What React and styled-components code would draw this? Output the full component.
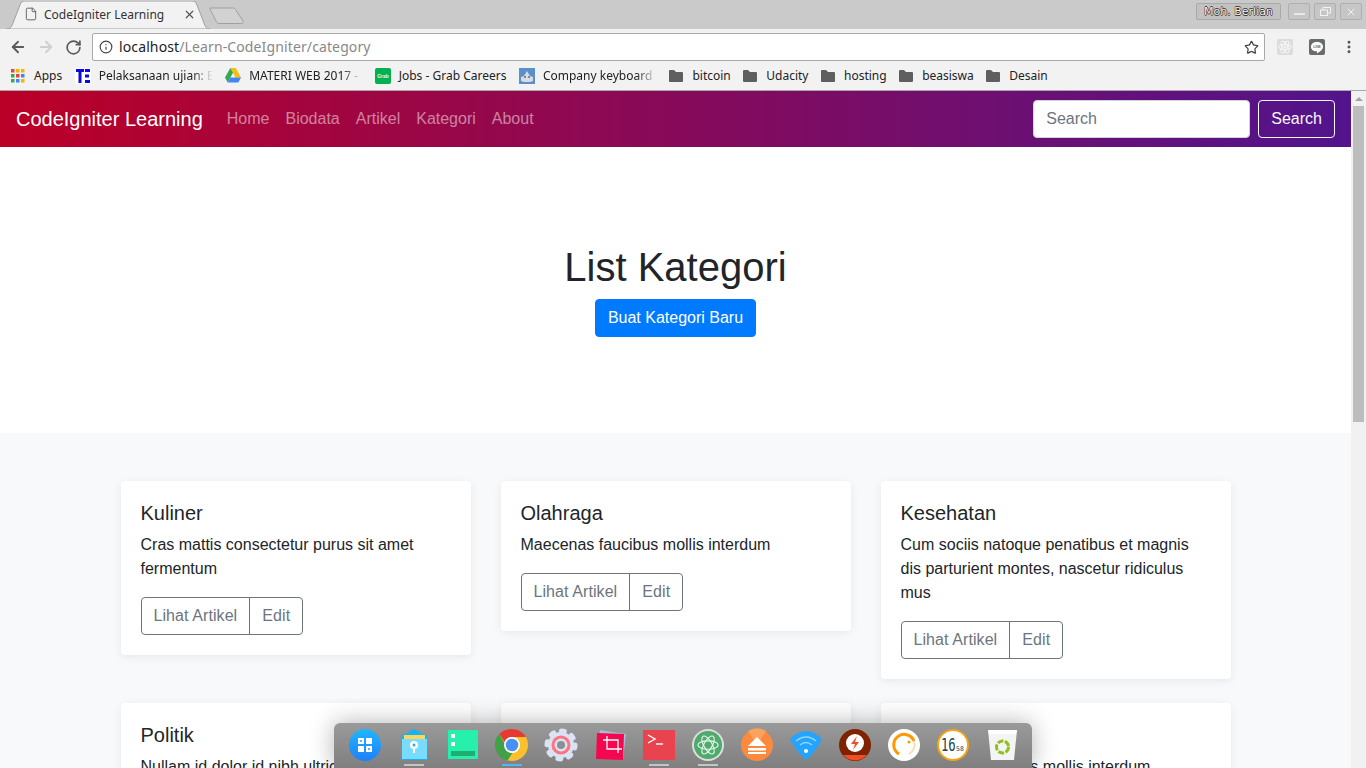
import React from 'react';
import styled, { createGlobalStyle } from 'styled-components';
import { ArrowLeft, ArrowRight, RotateCw, Info, Star, File, X, EllipsisVertical } from 'lucide-react';

const GlobalStyle = createGlobalStyle`
  html, body {
    margin: 0;
    height: 100%;
    overflow: hidden;
  }
  * {
    box-sizing: border-box;
  }
`;

const categories = [
  { id: 1, name: 'Kuliner', desc: 'Cras mattis consectetur purus sit amet fermentum' },
  { id: 2, name: 'Olahraga', desc: 'Maecenas faucibus mollis interdum' },
  { id: 3, name: 'Kesehatan', desc: 'Cum sociis natoque penatibus et magnis dis parturient montes, nascetur ridiculus mus' },
  { id: 4, name: 'Politik', desc: 'Nullam id dolor id nibh ultricies vehicula ut id elit' },
  { id: 5, name: 'Teknologi', desc: 'Donec ullamcorper nulla non metus auctor fringilla' },
  { id: 6, name: 'Wisata', desc: 'Maecenas faucibus mollis interdum' },
];

const Screen = styled.div`
  position: relative;
  display: flex;
  flex-direction: column;
  width: 1366px;
  height: 768px;
  overflow: hidden;
  font-family: "Liberation Sans", Arial, sans-serif;
`;

/* browser chrome */
const TabStrip = styled.div`
  display: flex;
  align-items: flex-end;
  height: 29px;
  flex: none;
  padding-left: 6px;
  background: #cacaca;
`;

const Tab = styled.div`
  position: relative;
  display: flex;
  align-items: center;
  width: 204px;
  height: 28px;
  padding: 0 14px 2px 18px;
  font: 12px "Noto Sans", sans-serif;
  color: #333;
`;

const TabShape = styled.svg`
  position: absolute;
  left: 0;
  top: 0;
  z-index: 0;
`;

const TabTitle = styled.span`
  position: relative;
  flex: 1;
  margin-left: 6px;
  white-space: nowrap;
`;

const TabIcon = styled.span`
  position: relative;
  display: flex;
  color: #555;
`;

const NewTab = styled.svg`
  margin: 0 0 4px -1px;
`;

const WindowControls = styled.div`
  display: flex;
  align-self: flex-start;
  align-items: center;
  gap: 4px;
  margin: 3px 4px 0 auto;
`;

const UserBadge = styled.div`
  display: flex;
  align-items: center;
  justify-content: center;
  width: 85px;
  height: 17px;
  margin-right: 3px;
  background: #c2c2c2;
  border: 1px solid #a9a9a9;
  border-radius: 2px;
  font: 11px "DejaVu Sans", sans-serif;
  color: #f4f4f4;
  text-shadow: 0.6px 0 0 #333, -0.6px 0 0 #333, 0 0.6px 0 #333, 0 -0.6px 0 #333;
`;

const WindowButton = styled.div`
  display: flex;
  align-items: center;
  justify-content: center;
  width: 22px;
  height: 17px;
  background: #c6c6c6;
  border: 1px solid #aeaeae;
  border-radius: 2px;
  color: #f2f2f2;
`;

const Toolbar = styled.div`
  display: flex;
  align-items: center;
  height: 33px;
  flex: none;
  padding: 3px 9px 0 9px;
  background: #f2f2f2;
  color: #5a5a5a;
`;

const NavIcon = styled.span`
  display: flex;
  width: 18px;
  margin-right: 10px;
  color: ${(p) => (p.$muted ? '#cfcfcf' : '#5a5a5a')};
  &:nth-child(3) {
    margin-right: 9px;
  }
`;

const Omnibox = styled.div`
  display: flex;
  align-items: center;
  flex: 1;
  height: 28px;
  padding: 0 5px 0 6px;
  background: #fff;
  border: 1px solid #a9a9a9;
  border-radius: 2px;
`;

const Url = styled.div`
  flex: 1;
  margin: 0 0 2px 6px;
  font: 14px "Noto Sans", sans-serif;
  letter-spacing: 0.12px;
  color: #888;
  b {
    font-weight: 400;
    color: #222;
  }
`;

const Extensions = styled.div`
  display: flex;
  gap: 16px;
  margin-left: 12px;
`;

const Extension = styled.span`
  display: flex;
  align-items: center;
  justify-content: center;
  width: 16px;
  height: 16px;
  border-radius: 2px;
  background: ${(p) => p.$bg};
`;

const Bookmarks = styled.div`
  display: flex;
  align-items: center;
  gap: 12.5px;
  height: 29px;
  flex: none;
  padding: 0 0 1px 11px;
  background: #f2f2f2;
  border-bottom: 1px solid #a8a8a8;
`;

const Bookmark = styled.div`
  display: flex;
  align-items: center;
  gap: 8px;
  flex: none;
  font: 12px "Noto Sans", sans-serif;
  color: #222;
  white-space: nowrap;
  svg {
    flex: none;
  }
`;

const BookmarkLabel = styled.span`
  ${(p) => p.$width && `
    width: ${p.$width}px;
    mask-image: linear-gradient(to right, #000 82%, transparent);
  `}
`;

/* page inside the browser */
const Viewport = styled.div`
  display: flex;
  flex: 1;
  min-height: 0;
`;

const Page = styled.div`
  flex: 1;
  min-width: 0;
  overflow: hidden;
  color: #212529;
  font-size: 16px;
  line-height: 1.5;
`;

const Scrollbar = styled.div`
  width: 15px;
  flex: none;
  padding: 0 2px;
  background: #f1f1f1;
`;

const ScrollArrow = styled.div`
  width: 0;
  margin: 6px auto 5px;
  border-left: 4px solid transparent;
  border-right: 4px solid transparent;
  border-bottom: 4px solid #a3a3a3;
`;

const ScrollThumb = styled.div`
  height: 316px;
  background: #bdbdbd;
`;

const Navbar = styled.nav`
  display: flex;
  align-items: center;
  height: 56px;
  padding: 0 16px;
  background: linear-gradient(to right, #bb0027, #52148c);
`;

const Brand = styled.a`
  margin-right: 16px;
  font-size: 20px;
  color: #fff;
`;

const NavLink = styled.a`
  padding: 8px;
  color: rgba(255, 255, 255, 0.5);
`;

const SearchForm = styled.form`
  display: flex;
  gap: 8px;
  margin-left: auto;
`;

const SearchInput = styled.input`
  width: 217px;
  height: 38px;
  padding: 6px 12px;
  border: 1px solid #ced4da;
  border-radius: 4px;
  font: 16px "Liberation Sans", Arial, sans-serif;
  color: #495057;
  &::placeholder {
    color: #6c757d;
  }
`;

const SearchButton = styled.button`
  height: 38px;
  padding: 0 12px;
  background: transparent;
  border: 1px solid #f8f9fa;
  border-radius: 4px;
  font: 16px "Liberation Sans", Arial, sans-serif;
  color: #f8f9fa;
`;

const Hero = styled.section`
  padding: 96px 0;
  text-align: center;
  background: #fff;
`;

const HeroTitle = styled.h1`
  margin: 0 0 8px;
  font-size: 40px;
  font-weight: 500;
  line-height: 1.2;
`;

const PrimaryButton = styled.a`
  display: inline-block;
  padding: 6px 12px;
  border: 1px solid #007bff;
  border-radius: 4px;
  background: #007bff;
  color: #fff;
`;

const Album = styled.section`
  padding: 48px 0;
  background: #f8f9fa;
`;

const CardGrid = styled.div`
  display: grid;
  grid-template-columns: repeat(3, 350px);
  gap: 0 30px;
  align-items: start;
  width: 1110px;
  margin: 0 auto;
`;

const Card = styled.div`
  margin-bottom: 24px;
  padding: 20px;
  background: #fff;
  border-radius: 4px;
  box-shadow: 0 2px 10px rgba(0, 0, 0, 0.07);
`;

const CardTitle = styled.h5`
  margin: 0 0 8px;
  font-size: 20px;
  font-weight: 500;
  line-height: 1.2;
`;

const CardText = styled.p`
  margin: 0 0 16px;
`;

const ButtonGroup = styled.div`
  display: inline-flex;
`;

const GroupButton = styled.a`
  padding: 6px 12px;
  border: 1px solid #6c757d;
  letter-spacing: 0.08px;
  color: #6c757d;
  &:first-child {
    border-radius: 4px 0 0 4px;
  }
  &:last-child {
    margin-left: -1px;
    border-radius: 0 4px 4px 0;
  }
`;

/* desktop dock, it lies over the browser window */
const Dock = styled.div`
  position: absolute;
  left: 334px;
  bottom: 0;
  display: flex;
  align-items: flex-start;
  justify-content: space-between;
  width: 698px;
  height: 45px;
  padding: 5px 6px 0 7px;
  background: linear-gradient(#9a9a9a, #7f7f7f);
  border-radius: 6px 6px 0 0;
  box-shadow: 0 0 24px rgba(0, 0, 0, 0.3);
`;

const DockItem = styled.div`
  position: relative;
  display: flex;
  justify-content: center;
  width: 48px;
  &::after {
    content: '';
    display: ${(p) => (p.$running ? 'block' : 'none')};
    position: absolute;
    left: 14px;
    top: 36px;
    width: 20px;
    height: 2px;
    background: ${(p) => (p.$running === 'active' ? '#59b4ee' : '#c4c4c4')};
  }
`;

const GridIcon = () => (
  <svg width="14" height="14" viewBox="0 0 14 14" style={{ marginRight: 1 }}>
    {['#e8453c', '#f4b400', '#f4b400', '#34a853', '#e8453c', '#4285f4', '#34a853', '#4285f4', '#f4b400'].map((c, i) => (
      <rect key={i} x={(i % 3) * 5} y={Math.floor(i / 3) * 5} width="3.5" height="3.5" fill={c} />
    ))}
  </svg>
);

const TeIcon = () => (
  <svg width="16" height="16" viewBox="0 0 16 16">
    <rect width="16" height="16" fill="#fff" />
    <path d="M1 1h8v3H6.500v11h-3V4H1zM10 1h5v3h-5zM10 6.500h4v3h-4zM10 12h5v3h-5z" fill="#0a0ae0" />
  </svg>
);

const DriveIcon = () => (
  <svg width="16" height="15" viewBox="0 0 16 15">
    <path d="M5.300 0h5.400l5.300 9.600h-5.400z" fill="#fbbc05" />
    <path d="M5.300 0 8 4.800 2.700 14.600 0 9.600z" fill="#34a853" />
    <path d="M5.400 9.600H16l-2.700 5H2.700z" fill="#4285f4" />
  </svg>
);

const GrabIcon = () => (
  <svg width="16" height="16" viewBox="0 0 16 16">
    <rect width="16" height="16" rx="2" fill="#00b14f" />
    <text x="8" y="10" textAnchor="middle" fontSize="5" fontFamily="Liberation Sans" fontWeight="700" fill="#e6f8ee">Grab</text>
  </svg>
);

const CompanyIcon = () => (
  <svg width="16" height="16" viewBox="0 0 16 16">
    <rect width="16" height="16" fill="#5b8fc9" />
    <path d="M2 13V9l3-1 3-5 3 5 3 1v4l-3 1H5z" fill="#d7dbe2" />
    <circle cx="6" cy="9" r="1" fill="#5b6b85" />
    <circle cx="10" cy="9" r="1" fill="#5b6b85" />
  </svg>
);

const FolderIcon = () => (
  <svg width="14" height="12" viewBox="0 0 14 12" style={{ marginRight: 1 }}>
    <path d="M1 0h4l2 2h6a1 1 0 0 1 1 1v8a1 1 0 0 1-1 1H1a1 1 0 0 1-1-1V1a1 1 0 0 1 1-1z" fill="#5f5f5f" />
  </svg>
);

const AtomIcon = ({ stroke, size = 14 }) => (
  <svg width={size} height={size} viewBox="0 0 24 24" fill="none" stroke={stroke} strokeWidth="1.6">
    <ellipse cx="12" cy="12" rx="11" ry="4.500" />
    <ellipse cx="12" cy="12" rx="11" ry="4.500" transform="rotate(60 12 12)" />
    <ellipse cx="12" cy="12" rx="11" ry="4.500" transform="rotate(120 12 12)" />
    <circle cx="12" cy="12" r="1.500" fill={stroke} />
  </svg>
);

const dockIcons = [
  {
    id: 'launcher',
    svg: (
      <>
        <defs>
          <linearGradient id="launcherFill" x1="0" y1="0" x2="0" y2="1">
            <stop offset="0" stopColor="#20b6fb" />
            <stop offset="1" stopColor="#1f7ffb" />
          </linearGradient>
        </defs>
        <circle cx="17" cy="17" r="16" fill="url(#launcherFill)" />
        <path d="M10 10h6v6h-6zM18 10h6v6h-6zM10 18h6v6h-6zM18 18h6v6h-6z" fill="#fff" />
        <path d="M12 12h2v2h-2zM20 20h2v2h-2z" fill="#59b2fb" />
      </>
    ),
  },
  {
    id: 'files',
    running: true,
    svg: (
      <>
        <path d="M4 8 17 1l13 7v24H4z" fill="#14b4f4" />
        <path d="M7 7h21v4H7z" fill="#ffd65c" />
        <path d="M5 11h25v20H5z" fill="#78dcff" />
        <circle cx="17" cy="17" r="4" fill="#fff" />
        <path d="M16 17h2v8h-2z" fill="#fff" />
        <circle cx="17" cy="17" r="1.500" fill="#3aa8d8" />
      </>
    ),
  },
  {
    id: 'monitor',
    svg: (
      <>
        <rect x="2" y="2" width="30" height="29" fill="#27f0ac" />
        <path d="M5 6h4v4H5zM5 14h4v4H5z" fill="#fff" />
        <rect x="5" y="23" width="24" height="5" fill="#1fae72" />
      </>
    ),
  },
  {
    id: 'chrome',
    running: 'active',
    svg: (
      <>
        <circle cx="17" cy="17" r="16" fill="#fbc02d" />
        <path d="M17 1a16 16 0 0 1 13.900 8H17a8 8 0 0 0-7.400 5L4.300 6A16 16 0 0 1 17 1z" fill="#e53935" />
        <path d="M4.300 6l6.900 12a7 7 0 0 0 6.300 7l-5 7.600A16 16 0 0 1 4.300 6z" fill="#43a047" />
        <circle cx="17" cy="17" r="8" fill="#fff" />
        <circle cx="17" cy="17" r="6.300" fill="#4a90f0" />
      </>
    ),
  },
  {
    id: 'settings',
    svg: (
      <>
        <circle cx="17" cy="17" r="13" fill="#d9e3f4" />
        <circle cx="17" cy="17" r="14" fill="none" stroke="#d9e3f4" strokeWidth="5" strokeLinecap="round" strokeDasharray="3 8" />
        <circle cx="17" cy="17" r="9.500" fill="#ff7480" />
        <circle cx="17" cy="17" r="6.500" fill="#d9e3f4" />
        <circle cx="17" cy="17" r="4" fill="#8a8f98" />
      </>
    ),
  },
  {
    id: 'crop',
    svg: (
      <>
        <path d="M7 2l26 4-3 26L4 28z" fill="#a9c6e8" opacity="0.8" />
        <path d="M4 5l27 1-1 26-27-1z" fill="#f5074f" />
        <path d="M10 12h15v13M14 8v13h15" fill="none" stroke="#fff" strokeWidth="1.300" />
      </>
    ),
  },
  {
    id: 'terminal',
    running: true,
    svg: (
      <>
        <rect x="1" y="2" width="32" height="30" fill="#e9434f" />
        <path d="M6 7l7 4-7 4" fill="none" stroke="#fff" strokeWidth="1.400" />
        <path d="M14 16h7" stroke="#fff" strokeWidth="1.400" />
      </>
    ),
  },
  {
    id: 'atom',
    running: true,
    svg: (
      <>
        <circle cx="17" cy="17" r="16" fill="#ddd" />
        <circle cx="17" cy="17" r="14" fill="#4eaa6d" />
        <g transform="translate(6 6) scale(0.92)">
          <ellipse cx="12" cy="12" rx="11" ry="4.500" fill="none" stroke="#e8f5ec" strokeWidth="1.200" />
          <ellipse cx="12" cy="12" rx="11" ry="4.500" fill="none" stroke="#e8f5ec" strokeWidth="1.200" transform="rotate(60 12 12)" />
          <ellipse cx="12" cy="12" rx="11" ry="4.500" fill="none" stroke="#e8f5ec" strokeWidth="1.200" transform="rotate(120 12 12)" />
        </g>
      </>
    ),
  },
  {
    id: 'eject',
    svg: (
      <>
        <circle cx="17" cy="17" r="16" fill="#fb8a3c" />
        <path d="M17 17 8 3a16 16 0 0 1 18 0z" fill="#fba35c" />
        <path d="M17 9l9 9H8z" fill="#fff" />
        <path d="M8 20h18v2.500H8zM8 24h18v2H8z" fill="#fff" />
      </>
    ),
  },
  {
    id: 'wifi',
    svg: (
      <>
        <path d="M1 11Q17-5 33 11Q27 24 17 32Q7 24 1 11z" fill="#24a4ff" />
        <path d="M7 13q10-8 20 0M11 17q6-5 12 0" fill="none" stroke="#8fd5ff" strokeWidth="1.500" />
        <circle cx="17" cy="23" r="2" fill="#fff" />
      </>
    ),
  },
  {
    id: 'flash',
    svg: (
      <>
        <circle cx="17" cy="17" r="16" fill="#7f2200" />
        <path d="M5 27h24a16 16 0 0 1-24 0z" fill="#f04e23" />
        <circle cx="17" cy="15" r="9" fill="#fff" />
        <path d="M19 8l-6 8h4l-2 6 6-8h-4z" fill="#f04e23" />
      </>
    ),
  },
  {
    id: 'dial',
    svg: (
      <>
        <circle cx="17" cy="17" r="16" fill="#fff" />
        <path d="M12 26A10.500 10.500 0 1 1 27 13" fill="none" stroke="#f90" strokeWidth="3" />
        <path d="M27 13a10.500 10.500 0 0 1-5 13" fill="none" stroke="#f4e2bb" strokeWidth="2" />
        <circle cx="22" cy="14" r="1.500" fill="#f90" />
      </>
    ),
  },
  {
    id: 'clock',
    svg: (
      <>
        <circle cx="17" cy="17" r="15" fill="#fff" stroke="#f5a511" strokeWidth="2" />
        <text transform="translate(5 23) scale(0.72 1)" fontSize="17" fontFamily="DejaVu Sans Mono" fill="#24424a">16</text>
        <text x="20" y="23" fontSize="6.500" fontFamily="DejaVu Sans Mono" fill="#24424a">58</text>
      </>
    ),
  },
  {
    id: 'trash',
    svg: (
      <>
        <path d="M3 2h29l-3 30H6z" fill="#f4f4f4" />
        <path d="M3 2h29l-1 4H4z" fill="#fff" />
        <circle cx="17.500" cy="19" r="6" fill="none" stroke="#90c020" strokeWidth="3" strokeDasharray="6 1.500" />
      </>
    ),
  },
];

const bookmarks = [
  { id: 'apps', icon: <GridIcon />, label: 'Apps' },
  { id: 'te', icon: <TeIcon />, label: 'Pelaksanaan ujian: E', width: 114 },
  { id: 'drive', icon: <DriveIcon />, label: 'MATERI WEB 2017 -', width: 113 },
  { id: 'grab', icon: <GrabIcon />, label: 'Jobs - Grab Careers' },
  { id: 'company', icon: <CompanyIcon />, label: 'Company keyboard t', width: 114 },
  { id: 'bitcoin', icon: <FolderIcon />, label: 'bitcoin' },
  { id: 'udacity', icon: <FolderIcon />, label: 'Udacity' },
  { id: 'hosting', icon: <FolderIcon />, label: 'hosting' },
  { id: 'beasiswa', icon: <FolderIcon />, label: 'beasiswa' },
  { id: 'desain', icon: <FolderIcon />, label: 'Desain' },
];

export default function App() {
  return (
    <Screen>
      <GlobalStyle />
      <TabStrip>
        <Tab>
          <TabShape width="204" height="28" viewBox="0 0 204 28">
            <path d="M0 28C5 28 6 25 7 22L14 4C15 1 16 0 19 0H186C189 0 190 1 191 4L198 22C199 25 200 28 204 28Z" fill="#f2f2f2" stroke="#a0a0a0" />
          </TabShape>
          <TabIcon><File size={14} strokeWidth={1.5} /></TabIcon>
          <TabTitle>CodeIgniter Learning</TabTitle>
          <TabIcon><X size={13} strokeWidth={2.2} /></TabIcon>
        </Tab>
        <NewTab width="36" height="19" viewBox="0 0 36 19">
          <path d="M1 2h23c1 0 2 .5 2.500 1.500L34 15c.5 1.500 0 2.500-1.500 2.500H10c-1 0-2-.5-2.500-1.500L1 3z" fill="#d2d2d2" stroke="#a0a0a0" />
        </NewTab>
        <WindowControls>
          <UserBadge>Moh. Berlian</UserBadge>
          <WindowButton>
            <svg width="11" height="9" viewBox="0 0 11 9"><path d="M0 7h11" stroke="#f2f2f2" strokeWidth="1.600" /></svg>
          </WindowButton>
          <WindowButton>
            <svg width="11" height="9" viewBox="0 0 11 9" fill="none" stroke="#f2f2f2"><rect x="0.500" y="3" width="7" height="5.500" /><path d="M3 3V.5h7.500V6H8" /></svg>
          </WindowButton>
          <WindowButton>
            <X size={12} strokeWidth={2} />
          </WindowButton>
        </WindowControls>
      </TabStrip>
      <Toolbar>
        <NavIcon><ArrowLeft size={18} strokeWidth={2.4} /></NavIcon>
        <NavIcon $muted><ArrowRight size={18} strokeWidth={2.4} /></NavIcon>
        <NavIcon><RotateCw size={17} strokeWidth={2.4} /></NavIcon>
        <Omnibox>
          <Info size={14} strokeWidth={2} color="#444" />
          <Url><b>localhost</b>/Learn-CodeIgniter/category</Url>
          <Star size={15} strokeWidth={2} color="#444" />
        </Omnibox>
        <Extensions>
          <Extension $bg="#dcdcdc"><AtomIcon stroke="#f7f7f7" /></Extension>
          <Extension $bg="#6b6b6b">
            <svg width="14" height="13" viewBox="0 0 14 13">
              <path d="M7 1c3.500 0 6 2 6 4.700S10 10.500 7 12.500C7.300 10.500 7 10.300 6.300 10.300 3 10.300 1 8.300 1 5.700S3.500 1 7 1z" fill="#fff" />
              <text x="7" y="7.200" textAnchor="middle" fontSize="3.400" fontFamily="Liberation Sans" fontWeight="700" fill="#6b6b6b">LINE</text>
            </svg>
          </Extension>
          <Extension $bg="transparent"><EllipsisVertical size={16} strokeWidth={2.4} color="#555" /></Extension>
        </Extensions>
      </Toolbar>
      <Bookmarks>
        {bookmarks.map((b) => (
          <Bookmark key={b.id}>
            {b.icon}
            <BookmarkLabel $width={b.width}>{b.label}</BookmarkLabel>
          </Bookmark>
        ))}
      </Bookmarks>
      <Viewport>
        <Page>
          <Navbar>
            <Brand>CodeIgniter Learning</Brand>
            <NavLink>Home</NavLink>
            <NavLink>Biodata</NavLink>
            <NavLink>Artikel</NavLink>
            <NavLink>Kategori</NavLink>
            <NavLink>About</NavLink>
            <SearchForm>
              <SearchInput placeholder="Search" />
              <SearchButton type="button">Search</SearchButton>
            </SearchForm>
          </Navbar>
          <Hero>
            <HeroTitle>List Kategori</HeroTitle>
            <PrimaryButton>Buat Kategori Baru</PrimaryButton>
          </Hero>
          <Album>
            <CardGrid>
              {categories.map((c) => (
                <Card key={c.id}>
                  <CardTitle>{c.name}</CardTitle>
                  <CardText>{c.desc}</CardText>
                  <ButtonGroup>
                    <GroupButton>Lihat Artikel</GroupButton>
                    <GroupButton>Edit</GroupButton>
                  </ButtonGroup>
                </Card>
              ))}
            </CardGrid>
          </Album>
        </Page>
        <Scrollbar>
          <ScrollArrow />
          <ScrollThumb />
        </Scrollbar>
      </Viewport>
      <Dock>
        {dockIcons.map((d) => (
          <DockItem key={d.id} $running={d.running}>
            <svg width="34" height="34" viewBox="0 0 34 34">{d.svg}</svg>
          </DockItem>
        ))}
      </Dock>
    </Screen>
  );
}
